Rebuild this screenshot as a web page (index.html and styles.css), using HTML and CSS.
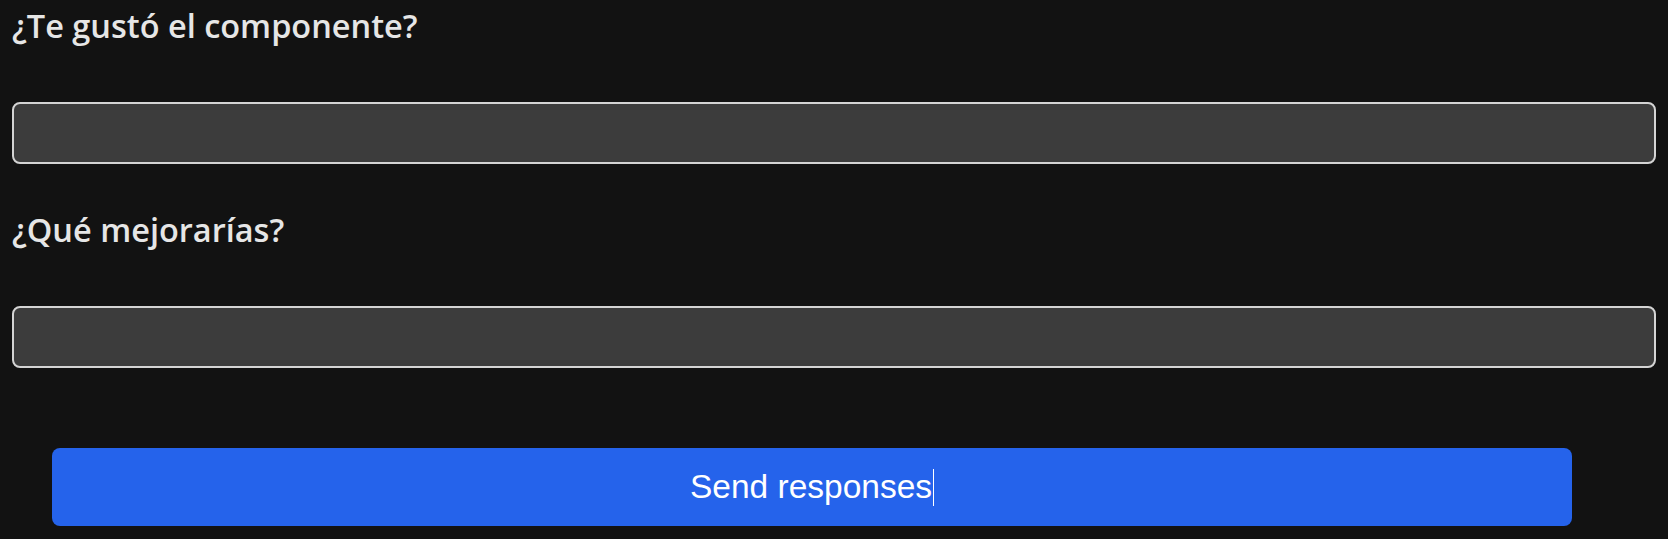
FILE: index.html
```html
<!DOCTYPE html>
<html lang="es">
<head>
<meta charset="utf-8">
<link rel="stylesheet" href="styles.css">
</head>
<body>
<form class="survey">
  <div class="field">
    <label class="question" for="q1">¿Te gustó el componente?</label>
    <input class="answer" id="q1" type="text">
  </div>
  <div class="field">
    <label class="question" for="q2">¿Qué mejorarías?</label>
    <input class="answer" id="q2" type="text">
  </div>
  <button class="send" type="button">Send responses<span class="caret"></span></button>
</form>
</body>
</html>
```
FILE: styles.css
```css
html, body {
  margin: 0;
  padding: 0;
  background: #121212;
}
body {
  width: 1668px;
  height: 539px;
  overflow: hidden;
}
.survey {
  display: flex;
  flex-direction: column;
  padding: 7px 12px 0 12px;
}
.field {
  display: flex;
  flex-direction: column;
  gap: 57px;
  margin-bottom: 47px;
}
.question {
  font-family: "Open Sans", "Noto Sans", sans-serif;
  font-weight: 600;
  font-size: 32.5px;
  line-height: 38px;
  color: #e6e6e6;
}
.answer {
  box-sizing: border-box;
  height: 62px;
  width: 100%;
  margin: 0;
  background: #3c3c3c;
  border: 2px solid #d4d4d4;
  border-radius: 8px;
  outline: none;
}
.send {
  box-sizing: border-box;
  margin: 33px 84px 0 40px;
  height: 78px;
  border: none;
  border-radius: 8px;
  background: #2563eb;
  color: #ffffff;
  font-family: "Liberation Sans", Arial, sans-serif;
  font-size: 33.5px;
  display: flex;
  align-items: center;
  justify-content: center;
  padding: 0;
}
.caret {
  display: inline-block;
  width: 1px;
  height: 37px;
  margin-left: 1px;
  background: #ffffff;
}
```
